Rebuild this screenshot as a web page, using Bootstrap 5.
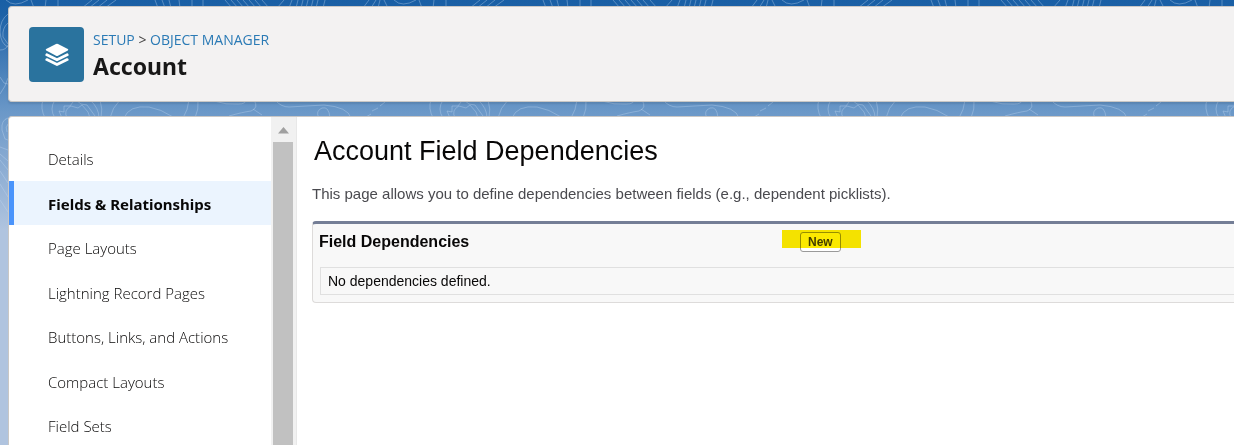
<!DOCTYPE html>
<html lang="en">
<head>
<meta charset="utf-8">
<meta name="viewport" content="width=device-width, initial-scale=1">
<title>Account | Object Manager</title>
<link href="https://cdn.jsdelivr.net/npm/bootstrap@5.3.0/dist/css/bootstrap.min.css" rel="stylesheet">
<style>
body{font-family:"Noto Sans",sans-serif;font-size:14px;color:#080707;background:#b0c4df}
.backdrop{height:280px;z-index:-1;background:linear-gradient(#195fa5 0,#1d62a7 15px,#6b98c8 112px,#b0c4df 230px)}
.shell{padding:6px 0 0 8px;gap:14px}
.page-head{background:#f3f2f2;border:1px solid #c9c7c5;border-right:0;border-radius:4px 0 0 4px;padding:20px 20px 19px;gap:9px;box-shadow:0 2px 2px rgba(0,0,0,.1)}
.head-icon{width:55px;height:55px;border-radius:4px;background:#2a739e}
.crumbs{font-family:"Open Sans","Noto Sans",sans-serif;font-size:14px;line-height:25px;color:#444}
.crumbs a{color:#2a7ab5}
.page-head h1{font-size:23px;line-height:29px;color:#181818}
.panel{background:#fff;border:1px solid #c9c7c5;border-width:1px 0 0 1px;border-radius:4px 0 0 0}
.side{width:262px;padding-top:19px}
.side a{font-family:"Open Sans","Noto Sans",sans-serif;font-weight:350;font-size:15px;line-height:20px;padding:13px 0 12px 34px;border-left:5px solid transparent;color:#080707}
.side a:nth-child(even){padding-bottom:11px}
.side a.active{font-family:"Noto Sans",sans-serif;font-weight:700;background:#ebf4fe;border-left-color:#4a94fb}
.track{width:26px;background:#f1f1f1;padding:10px 3px 0 2px;border-right:1px solid #e8e8e8}
.thumb{background:#c1c1c1}
.content{font-family:"Liberation Sans",sans-serif;padding:17px 0 0 15px}
.content h2{font-size:27px;line-height:34px;padding-left:2px}
.intro{font-size:15px;line-height:20px;color:#4a4a4f;margin:16px 0 17px}
.block-box{background:#f8f8f8;border:1px solid #dddbda;border-top:3px solid #747e96;border-right:0;border-radius:4px 0 0 4px;padding:7px 0 7px 6px}
.block-box h3{font-size:16px;line-height:22px;width:481px}
.btn-new{font-size:12px;font-weight:700;line-height:16px;padding:1px 7px;margin:1px 0;border:1px solid #9a9a9a;border-radius:3px;background:#fff;color:#444}
.btn-new::after{content:"";position:absolute;left:-19px;right:-21px;top:-3px;height:18px;background:#fbe900;mix-blend-mode:multiply}
.empty-note{font-size:14px;line-height:20px;padding:3px 7px;margin:14px 0 0 1px;border:1px solid #e0e0e0;border-right:0}
</style>
</head>
<body class="overflow-hidden">
<div class="backdrop position-absolute top-0 start-0 w-100" aria-hidden="true">
<svg width="100%" height="280" fill="none">
<defs>
<pattern id="contours" width="388" height="280" patternUnits="userSpaceOnUse">
<g fill="none" stroke="#c3daf1" stroke-opacity=".36" stroke-width="1">
<path d="M31 0l3 8M46 0l-1 8M58 0v8M82 8l10-8M89 8l10-8M97 8l10-8M105 8l11-8M155 0l3 8M162 0l3 8M169 0l2 8M179 0l1 8M192 0v8M203 0v8M225 0l7 8M231 0l7 8M237 0l7 8M243 0l7 8M249 0l7 8M255 0l7 8M262 0l7 8M277 8l7-8M289 8l3-8M296 8l2-8M301 8l2-8M306 8l2-8M311 8l2-8M316 8l2-8M323 8l2-8M363 8l6-8M371 8l5-8M378 8l2-8M384 0l4 8M6 0q8 8 22 0"/>
<path d="M43 100q-3 8 2 18M55 100q-6 9 0 18M62 118l-3-7 5 1 0-6 6 0 3-4M67 118q-4-8 4-12l7 2 4-3 6 7 2 6M76 100l5 4 6 1 8 11M90 100q9 8 9 18M100 100q3 9 1 18M110 118q2-10 10-18M124 118q5-13 25-11 12 2 24 10M189 100q-1 10-6 18M198 100q1 9-3 18M214 101q12 4 24 3 8 0 8-4M229 116q14-4 22-5 8-3 3-11M253 109l9 6M275 100q6 7 14 7l35-2q24 2 27 13M319 118q-4-7 3-10 7-2 8 10M366 117l5-3M372 111l6-3M380 106l5-4"/>
<path d="M8 14Q0 20 0 32q1 12 8 15M8 23Q2 28 3 37l5 7M0 50q6 0 8-5M0 94q6-8 8-16M8 118q-7 2-6 12l3 9 3 1M8 124q-3 3-1 8M0 147l8 3M0 154l8 7M0 160l8 10M0 171l8 12M0 184l8 13M0 200l8 12M0 77l4 6 4 1"/>
</g>
</pattern>
</defs>
<rect width="100%" height="280" fill="url(#contours)"/>
</svg>
</div>

<div class="shell d-flex flex-column vh-100">
<header class="page-head d-flex">
<div class="head-icon d-flex align-items-center justify-content-center flex-shrink-0">
<svg width="24" height="24" viewBox="0 0 24 24" fill="#fff" aria-hidden="true">
<path d="M1.200 6 11 .9q1-.5 2 0L22.800 6q1 .8 0 1.600L13 12.800q-1 .4-2 0L1.200 7.600q-1-.8 0-1.600z"/>
<path d="M1.800 11.800l10.200 5 10.200-5M1.800 16.600l10.200 5 10.200-5" fill="none" stroke="#fff" stroke-width="2.800" stroke-linecap="round" stroke-linejoin="round"/>
</svg>
</div>
<div>
<nav class="crumbs" aria-label="Breadcrumb"><a href="#" class="text-decoration-none">SETUP</a> &gt; <a href="#" class="text-decoration-none">OBJECT MANAGER</a></nav>
<h1 class="fw-bold m-0">Account</h1>
</div>
</header>

<div class="panel d-flex flex-grow-1 overflow-hidden">
<nav class="side d-flex flex-column flex-shrink-0" aria-label="Object settings">
<a href="#" class="text-decoration-none">Details</a>
<a href="#" class="text-decoration-none active" aria-current="page">Fields &amp; Relationships</a>
<a href="#" class="text-decoration-none">Page Layouts</a>
<a href="#" class="text-decoration-none">Lightning Record Pages</a>
<a href="#" class="text-decoration-none">Buttons, Links, and Actions</a>
<a href="#" class="text-decoration-none">Compact Layouts</a>
<a href="#" class="text-decoration-none">Field Sets</a>
</nav>
<div class="track d-flex flex-column flex-shrink-0" aria-hidden="true">
<svg class="mx-auto mb-2 flex-shrink-0" width="11" height="7"><path d="M0 6.500 5.500 0 11 6.500z" fill="#a0a0a0"/></svg>
<div class="thumb flex-grow-1"></div>
</div>
<main class="content flex-grow-1">
<h2 class="fw-normal m-0">Account Field Dependencies</h2>
<p class="intro">This page allows you to define dependencies between fields (e.g., dependent picklists).</p>
<section class="block-box">
<div class="d-flex">
<h3 class="fw-bold m-0">Field Dependencies</h3>
<button type="button" class="btn-new position-relative">New</button>
</div>
<div class="empty-note">No dependencies defined.</div>
</section>
</main>
</div>
</div>
<script src="https://cdn.jsdelivr.net/npm/bootstrap@5.3.0/dist/js/bootstrap.bundle.min.js"></script>
</body>
</html>
